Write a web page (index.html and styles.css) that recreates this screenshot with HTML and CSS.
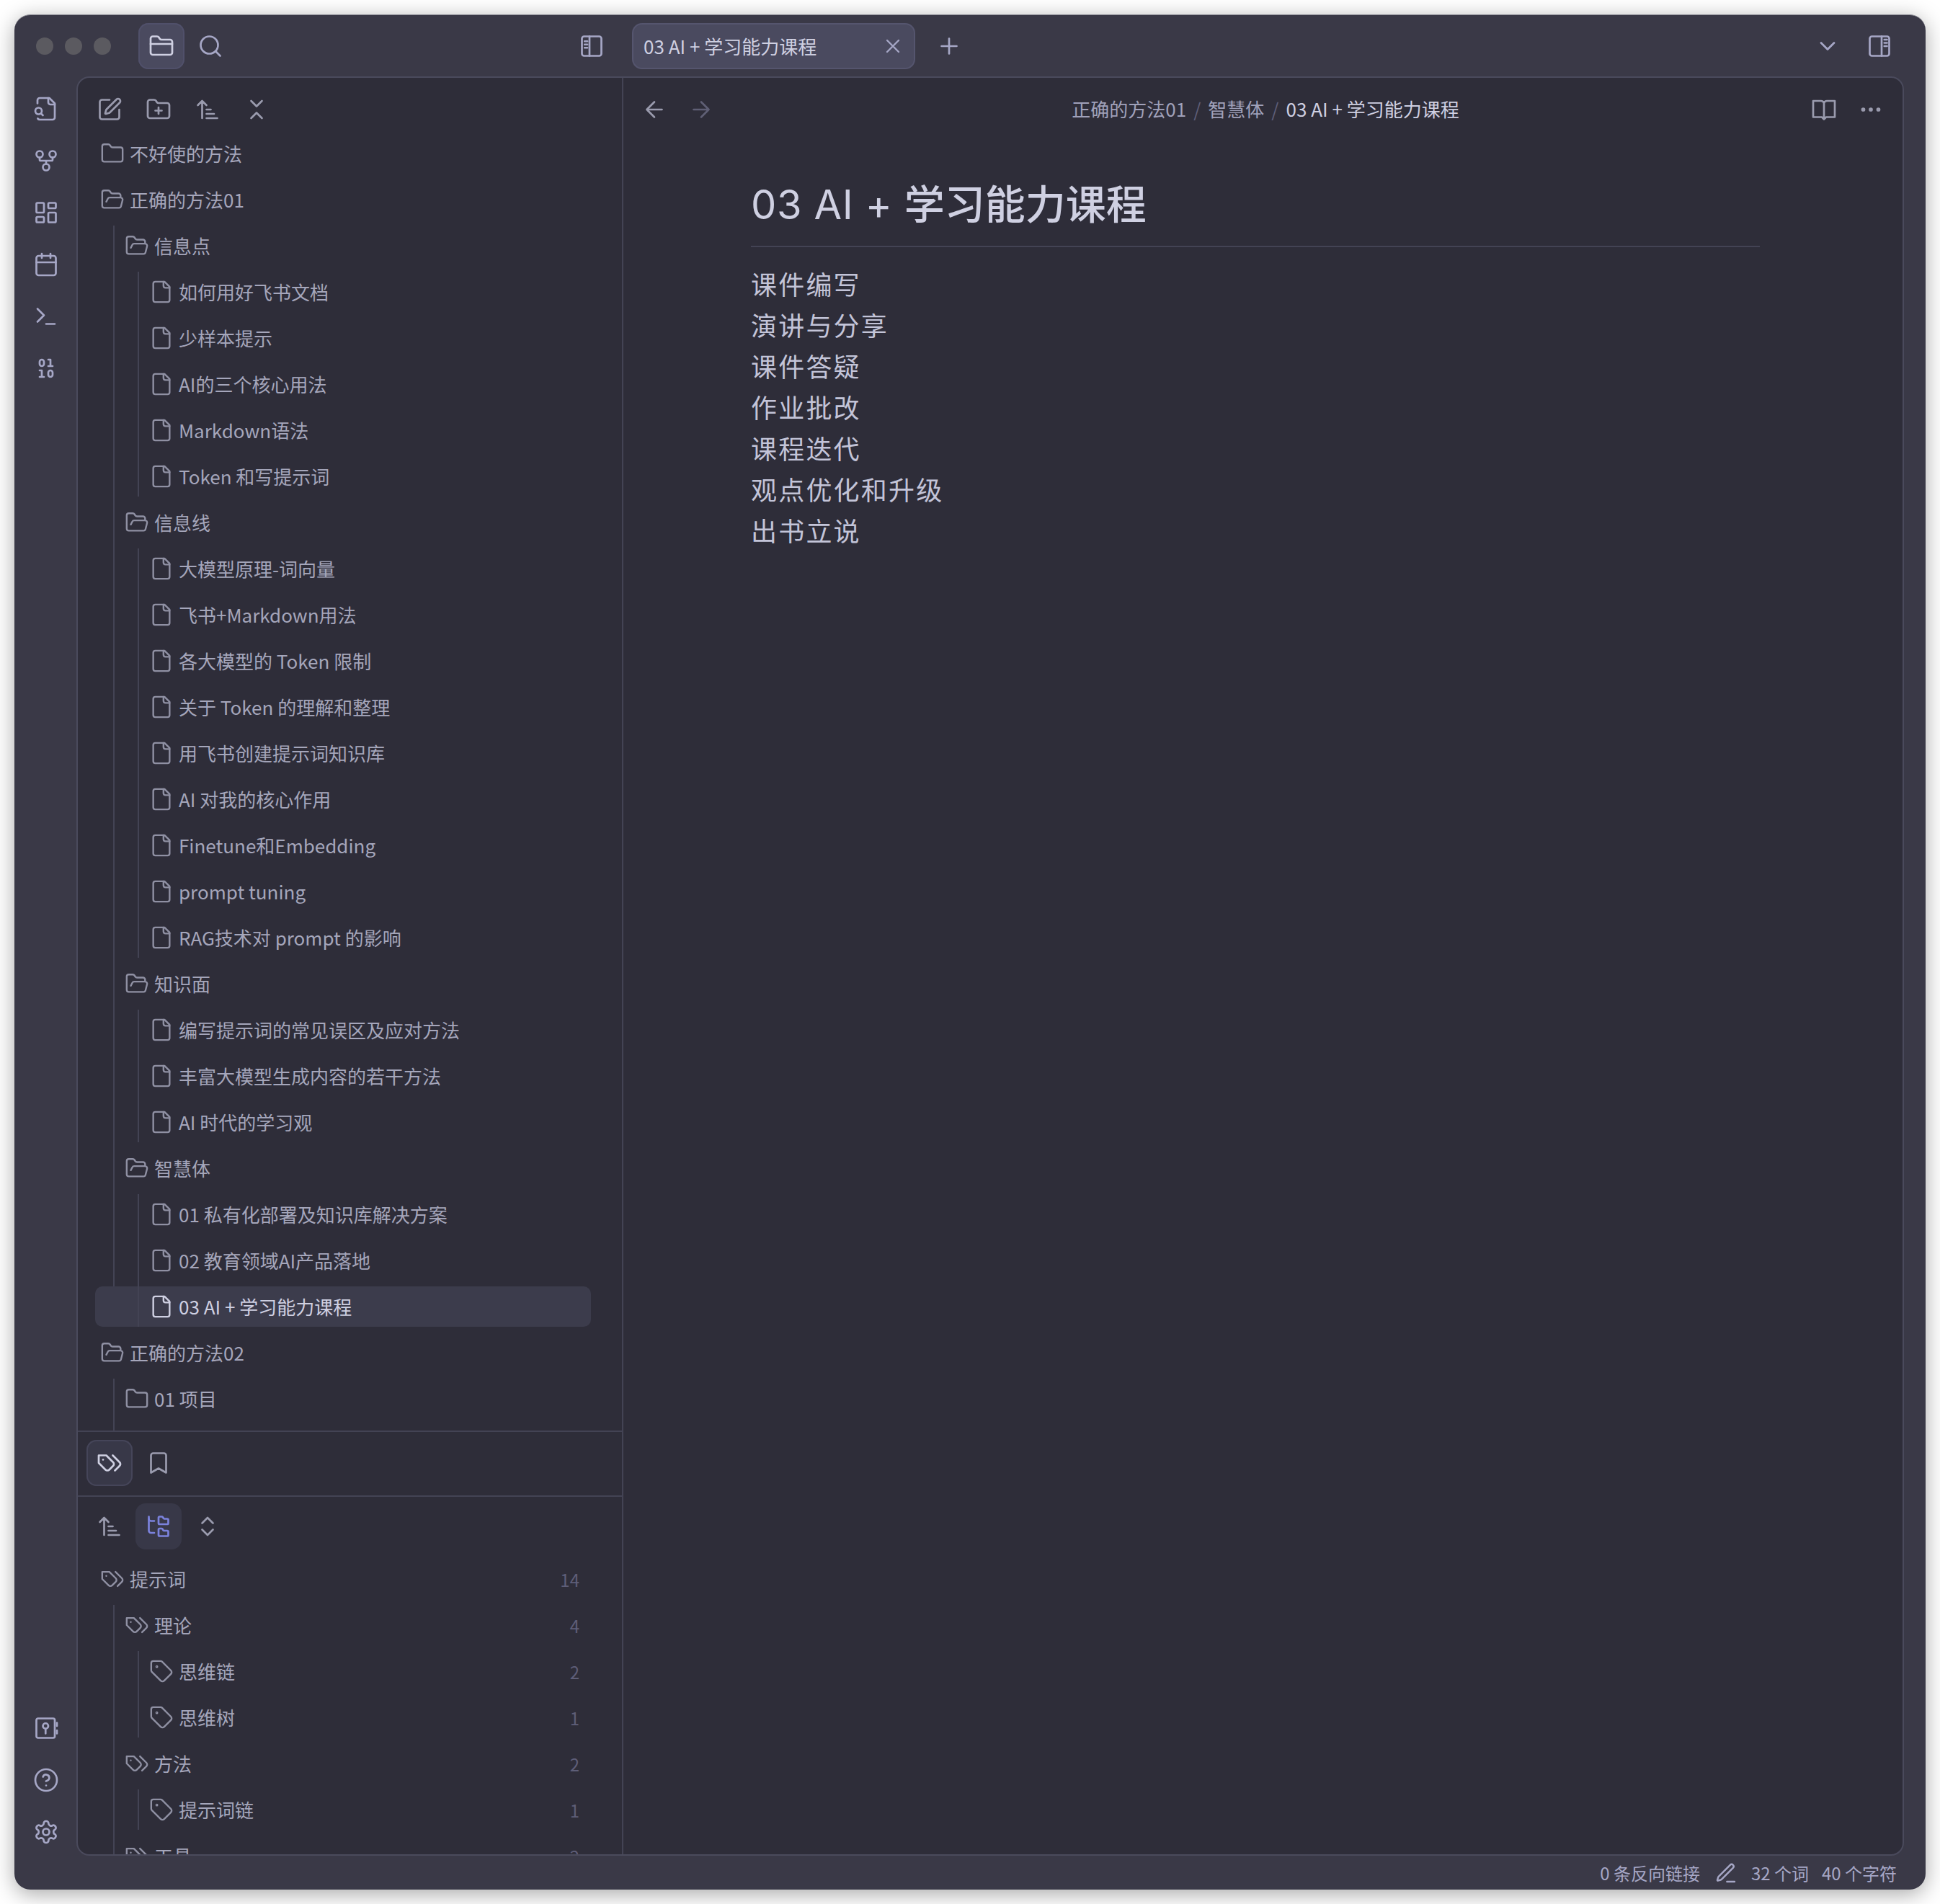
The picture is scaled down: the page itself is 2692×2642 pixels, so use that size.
FILE: index.html
```html
<!DOCTYPE html>
<html lang="zh">
<head>
<meta charset="utf-8">
<title>03 AI + 学习能力课程</title>
<link rel="stylesheet" href="styles.css">
</head>
<body>
<svg class="defs" width="0" height="0">
<symbol id="i-folder-top" viewBox="0 0 24 24"><path d="M20 20a2 2 0 0 0 2-2V8a2 2 0 0 0-2-2h-7.9a2 2 0 0 1-1.69-.9L9.6 3.9A2 2 0 0 0 7.93 3H4a2 2 0 0 0-2 2v13a2 2 0 0 0 2 2Z"/><path d="M2 10h20"/></symbol>
<symbol id="i-folder" viewBox="0 0 24 24"><path d="M20 20a2 2 0 0 0 2-2V8a2 2 0 0 0-2-2h-7.9a2 2 0 0 1-1.69-.9L9.6 3.9A2 2 0 0 0 7.93 3H4a2 2 0 0 0-2 2v13a2 2 0 0 0 2 2Z"/></symbol>
<symbol id="i-open" viewBox="0 0 24 24"><path d="m6 14 1.5-2.9A2 2 0 0 1 9.24 10H20a2 2 0 0 1 1.94 2.5l-1.54 6a2 2 0 0 1-1.95 1.5H4a2 2 0 0 1-2-2V5a2 2 0 0 1 2-2h3.9a2 2 0 0 1 1.69.9l.81 1.2a2 2 0 0 0 1.67.9H18a2 2 0 0 1 2 2v2"/></symbol>
<symbol id="i-file" viewBox="0 0 24 24"><path d="M15 2H6a2 2 0 0 0-2 2v16a2 2 0 0 0 2 2h12a2 2 0 0 0 2-2V7Z"/><path d="M14 2v4a2 2 0 0 0 2 2h4"/></symbol>
<symbol id="i-search" viewBox="0 0 24 24"><circle cx="11" cy="11" r="8"/><path d="m21 21-4.3-4.3"/></symbol>
<symbol id="i-left" viewBox="0 0 24 24"><rect x="3" y="3" width="18" height="18" rx="2"/><path d="M10 3v18M5.5 7.5H8M5.5 10.5H8M5.5 13.5H8"/></symbol>
<symbol id="i-right" viewBox="0 0 24 24"><rect x="3" y="3" width="18" height="18" rx="2"/><path d="M14 3v18M16.5 6H19M16.5 9H19M16.5 12H19"/></symbol>
<symbol id="i-edit" viewBox="0 0 24 24"><path d="M12 3H5a2 2 0 0 0-2 2v14a2 2 0 0 0 2 2h14a2 2 0 0 0 2-2v-7"/><path d="M18.375 2.625a1 1 0 0 1 3 3l-9.013 9.014a2 2 0 0 1-.853.505l-2.873.84a.5.5 0 0 1-.62-.62l.84-2.873a2 2 0 0 1 .506-.852z"/></symbol>
<symbol id="i-folderplus" viewBox="0 0 24 24"><path d="M20 20a2 2 0 0 0 2-2V8a2 2 0 0 0-2-2h-7.9a2 2 0 0 1-1.69-.9L9.6 3.9A2 2 0 0 0 7.93 3H4a2 2 0 0 0-2 2v13a2 2 0 0 0 2 2Z"/><path d="M12 10v6M9 13h6"/></symbol>
<symbol id="i-sort" viewBox="0 0 24 24"><path d="m3 8 4-4 4 4M7 4v16M11 12h4M11 16h7M11 20h10"/></symbol>
<symbol id="i-collapse" viewBox="0 0 24 24"><path d="m7 20 5-5 5 5M7 4l5 5 5-5"/></symbol>
<symbol id="i-expand" viewBox="0 0 24 24"><path d="m7 15 5 5 5-5M7 9l5-5 5 5"/></symbol>
<symbol id="i-filesearch" viewBox="0 0 24 24"><path d="M14 2v4a2 2 0 0 0 2 2h4"/><path d="M4.268 21a2 2 0 0 0 1.727 1H18a2 2 0 0 0 2-2V7l-5-5H6a2 2 0 0 0-2 2v3"/><path d="m9 18-1.5-1.5"/><circle cx="5" cy="14" r="3"/></symbol>
<symbol id="i-graph" viewBox="0 0 24 24"><circle cx="12" cy="18" r="3"/><circle cx="6" cy="6" r="3"/><circle cx="18" cy="6" r="3"/><path d="M18 9v2c0 .6-.4 1-1 1H7c-.6 0-1-.4-1-1V9M12 12v3"/></symbol>
<symbol id="i-dash" viewBox="0 0 24 24"><rect x="3" y="3" width="7" height="9" rx="1"/><rect x="14" y="3" width="7" height="5" rx="1"/><rect x="14" y="12" width="7" height="9" rx="1"/><rect x="3" y="16" width="7" height="5" rx="1"/></symbol>
<symbol id="i-cal" viewBox="0 0 24 24"><rect x="3" y="4" width="18" height="18" rx="2"/><path d="M16 2v4M8 2v4M3 10h18"/></symbol>
<symbol id="i-term" viewBox="0 0 24 24"><path d="m4 17 6-6-6-6M12 19h8"/></symbol>
<symbol id="i-binary" viewBox="0 0 24 24"><rect x="14" y="14" width="4" height="6" rx="2"/><rect x="6" y="4" width="4" height="6" rx="2"/><path d="M6 20h4M14 10h4M6 14h2v6M14 4h2v6"/></symbol>
<symbol id="i-vault" viewBox="0 0 24 24"><rect x="3" y="3" width="17" height="18" rx="1.5"/><circle cx="11.5" cy="10" r="2.5"/><path d="M11.5 12.5V17M22 7v3M22 14v3"/></symbol>
<symbol id="i-help" viewBox="0 0 24 24"><circle cx="12" cy="12" r="10"/><path d="M9.09 9a3 3 0 0 1 5.83 1c0 2-3 3-3 3M12 17h.01"/></symbol>
<symbol id="i-gear" viewBox="0 0 24 24"><path d="M12.22 2h-.44a2 2 0 0 0-2 2v.18a2 2 0 0 1-1 1.73l-.43.25a2 2 0 0 1-2 0l-.15-.08a2 2 0 0 0-2.73.73l-.22.38a2 2 0 0 0 .73 2.73l.15.1a2 2 0 0 1 1 1.72v.51a2 2 0 0 1-1 1.74l-.15.09a2 2 0 0 0-.73 2.73l.22.38a2 2 0 0 0 2.73.73l.15-.08a2 2 0 0 1 2 0l.43.25a2 2 0 0 1 1 1.73V20a2 2 0 0 0 2 2h.44a2 2 0 0 0 2-2v-.18a2 2 0 0 1 1-1.73l.43-.25a2 2 0 0 1 2 0l.15.08a2 2 0 0 0 2.73-.73l.22-.39a2 2 0 0 0-.73-2.73l-.15-.08a2 2 0 0 1-1-1.74v-.5a2 2 0 0 1 1-1.74l.15-.09a2 2 0 0 0 .73-2.73l-.22-.38a2 2 0 0 0-2.73-.73l-.15.08a2 2 0 0 1-2 0l-.43-.25a2 2 0 0 1-1-1.73V4a2 2 0 0 0-2-2z"/><circle cx="12" cy="12" r="3"/></symbol>
<symbol id="i-tags" viewBox="0 0 24 24"><path d="M9 5H2v7l6.29 6.29c.94.94 2.48.94 3.42 0l3.58-3.58c.94-.94.94-2.48 0-3.42L9 5Z"/><path d="M6 9.01V9"/><path d="m15 5 6.3 6.3a2.4 2.4 0 0 1 0 3.4L17 19"/></symbol>
<symbol id="i-tag" viewBox="0 0 24 24"><path d="M12.586 2.586A2 2 0 0 0 11.172 2H4a2 2 0 0 0-2 2v7.172a2 2 0 0 0 .586 1.414l8.704 8.704a2.426 2.426 0 0 0 3.42 0l6.58-6.58a2.426 2.426 0 0 0 0-3.42z"/><circle cx="7.5" cy="7.5" r=".5"/></symbol>
<symbol id="i-bookmark" viewBox="0 0 24 24"><path d="m19 21-7-4-7 4V5a2 2 0 0 1 2-2h10a2 2 0 0 1 2 2v16z"/></symbol>
<symbol id="i-tree" viewBox="0 0 24 24"><path d="M20 10a1 1 0 0 0 1-1V6a1 1 0 0 0-1-1h-2.5a1 1 0 0 1-.8-.4l-.9-1.2A1 1 0 0 0 15 3h-2a1 1 0 0 0-1 1v5a1 1 0 0 0 1 1Z"/><path d="M20 21a1 1 0 0 0 1-1v-3a1 1 0 0 0-1-1h-2.9a1 1 0 0 1-.88-.55l-.42-.85a1 1 0 0 0-.92-.6H13a1 1 0 0 0-1 1v5a1 1 0 0 0 1 1Z"/><path d="M3 5a2 2 0 0 0 2 2h3"/><path d="M3 3v13a2 2 0 0 0 2 2h3"/></symbol>
<symbol id="i-chevron" viewBox="0 0 24 24"><path d="m6 9 6 6 6-6"/></symbol>
<symbol id="i-x" viewBox="0 0 24 24"><path d="M18 6 6 18M6 6l12 12"/></symbol>
<symbol id="i-plus" viewBox="0 0 24 24"><path d="M5 12h14M12 5v14"/></symbol>
<symbol id="i-back" viewBox="0 0 24 24"><path d="m12 19-7-7 7-7M19 12H5"/></symbol>
<symbol id="i-forward" viewBox="0 0 24 24"><path d="M5 12h14M12 5l7 7-7 7"/></symbol>
<symbol id="i-book" viewBox="0 0 24 24"><path d="M12 5v16M2 4h7a3 3 0 0 1 3 2 3 3 0 0 1 3-2h7v15h-8l-2 2-2-2H2z"/></symbol>
<symbol id="i-dots" viewBox="0 0 24 24"><circle cx="12" cy="12" r="1"/><circle cx="19" cy="12" r="1"/><circle cx="5" cy="12" r="1"/></symbol>
<symbol id="i-pen" viewBox="0 0 24 24"><path d="M13 21h8"/><path d="M16.376 3.622a1 1 0 0 1 3.002 3.002L7.368 18.635a2 2 0 0 1-.855.506l-2.872.838a.5.5 0 0 1-.62-.62l.838-2.872a2 2 0 0 1 .506-.854z"/></symbol>
</svg>

<div class="window">
  <header class="titlebar">
    <div class="title-left">
      <div class="dots"><span class="dot"></span><span class="dot"></span><span class="dot"></span></div>
      <button class="btn btn-on"><svg class="ico ico-bright"><use href="#i-folder-top"/></svg></button>
      <button class="btn"><svg class="ico"><use href="#i-search"/></svg></button>
      <span class="spacer"></span>
      <button class="btn"><svg class="ico"><use href="#i-left"/></svg></button>
    </div>
    <div class="tab"><span class="tab-title">03 AI + 学习能力课程</span><svg class="ico ico-sm"><use href="#i-x"/></svg></div>
    <button class="btn btn-plus"><svg class="ico"><use href="#i-plus"/></svg></button>
    <span class="spacer"></span>
    <button class="btn"><svg class="ico"><use href="#i-chevron"/></svg></button>
    <button class="btn"><svg class="ico"><use href="#i-right"/></svg></button>
  </header>

  <div class="workspace">
    <nav class="ribbon">
      <div class="ribbon-group">
        <svg class="ico"><use href="#i-filesearch"/></svg>
        <svg class="ico"><use href="#i-graph"/></svg>
        <svg class="ico"><use href="#i-dash"/></svg>
        <svg class="ico"><use href="#i-cal"/></svg>
        <svg class="ico"><use href="#i-term"/></svg>
        <svg class="ico"><use href="#i-binary"/></svg>
      </div>
      <div class="ribbon-group">
        <svg class="ico"><use href="#i-vault"/></svg>
        <svg class="ico"><use href="#i-help"/></svg>
        <svg class="ico"><use href="#i-gear"/></svg>
      </div>
    </nav>

    <div class="panels">
      <aside class="sidebar">
        <div class="toolbar toolbar-files">
          <button class="btn"><svg class="ico ico-grey"><use href="#i-edit"/></svg></button>
          <button class="btn"><svg class="ico ico-grey"><use href="#i-folderplus"/></svg></button>
          <button class="btn"><svg class="ico ico-grey"><use href="#i-sort"/></svg></button>
          <button class="btn"><svg class="ico ico-grey"><use href="#i-collapse"/></svg></button>
        </div>
        <div class="tree tree-files">
          <div class="row l0"><svg class="ico-t"><use href="#i-folder"/></svg><span class="label">不好使的方法</span></div>
          <div class="row l0"><svg class="ico-t"><use href="#i-open"/></svg><span class="label">正确的方法01</span></div>
          <div class="group g1">
            <div class="row l1"><svg class="ico-t"><use href="#i-open"/></svg><span class="label">信息点</span></div>
            <div class="group g2">
              <div class="row l2"><svg class="ico-t"><use href="#i-file"/></svg><span class="label">如何用好飞书文档</span></div>
              <div class="row l2"><svg class="ico-t"><use href="#i-file"/></svg><span class="label">少样本提示</span></div>
              <div class="row l2"><svg class="ico-t"><use href="#i-file"/></svg><span class="label">AI的三个核心用法</span></div>
              <div class="row l2"><svg class="ico-t"><use href="#i-file"/></svg><span class="label">Markdown语法</span></div>
              <div class="row l2"><svg class="ico-t"><use href="#i-file"/></svg><span class="label">Token 和写提示词</span></div>
            </div>
            <div class="row l1"><svg class="ico-t"><use href="#i-open"/></svg><span class="label">信息线</span></div>
            <div class="group g2">
              <div class="row l2"><svg class="ico-t"><use href="#i-file"/></svg><span class="label">大模型原理-词向量</span></div>
              <div class="row l2"><svg class="ico-t"><use href="#i-file"/></svg><span class="label">飞书+Markdown用法</span></div>
              <div class="row l2"><svg class="ico-t"><use href="#i-file"/></svg><span class="label">各大模型的 Token 限制</span></div>
              <div class="row l2"><svg class="ico-t"><use href="#i-file"/></svg><span class="label">关于 Token 的理解和整理</span></div>
              <div class="row l2"><svg class="ico-t"><use href="#i-file"/></svg><span class="label">用飞书创建提示词知识库</span></div>
              <div class="row l2"><svg class="ico-t"><use href="#i-file"/></svg><span class="label">AI 对我的核心作用</span></div>
              <div class="row l2"><svg class="ico-t"><use href="#i-file"/></svg><span class="label">Finetune和Embedding</span></div>
              <div class="row l2"><svg class="ico-t"><use href="#i-file"/></svg><span class="label">prompt tuning</span></div>
              <div class="row l2"><svg class="ico-t"><use href="#i-file"/></svg><span class="label">RAG技术对 prompt 的影响</span></div>
            </div>
            <div class="row l1"><svg class="ico-t"><use href="#i-open"/></svg><span class="label">知识面</span></div>
            <div class="group g2">
              <div class="row l2"><svg class="ico-t"><use href="#i-file"/></svg><span class="label">编写提示词的常见误区及应对方法</span></div>
              <div class="row l2"><svg class="ico-t"><use href="#i-file"/></svg><span class="label">丰富大模型生成内容的若干方法</span></div>
              <div class="row l2"><svg class="ico-t"><use href="#i-file"/></svg><span class="label">AI 时代的学习观</span></div>
            </div>
            <div class="row l1"><svg class="ico-t"><use href="#i-open"/></svg><span class="label">智慧体</span></div>
            <div class="group g2">
              <div class="row l2"><svg class="ico-t"><use href="#i-file"/></svg><span class="label">01 私有化部署及知识库解决方案</span></div>
              <div class="row l2"><svg class="ico-t"><use href="#i-file"/></svg><span class="label">02 教育领域AI产品落地</span></div>
              <div class="row l2 row-active"><svg class="ico-t"><use href="#i-file"/></svg><span class="label">03 AI + 学习能力课程</span></div>
            </div>
          </div>
          <div class="row l0"><svg class="ico-t"><use href="#i-open"/></svg><span class="label">正确的方法02</span></div>
          <div class="group g1">
            <div class="row l1"><svg class="ico-t"><use href="#i-folder"/></svg><span class="label">01 项目</span></div>
            <div class="row l1 row-filler"></div>
          </div>
        </div>

        <div class="pane-tabs">
          <button class="btn btn-outline"><svg class="ico ico-bright"><use href="#i-tags"/></svg></button>
          <button class="btn"><svg class="ico ico-grey"><use href="#i-bookmark"/></svg></button>
        </div>
        <div class="toolbar toolbar-tags">
          <button class="btn"><svg class="ico ico-grey"><use href="#i-sort"/></svg></button>
          <button class="btn btn-fill"><svg class="ico ico-accent"><use href="#i-tree"/></svg></button>
          <button class="btn"><svg class="ico ico-grey"><use href="#i-expand"/></svg></button>
        </div>
        <div class="tree tree-tags">
          <div class="row l0"><svg class="ico-t"><use href="#i-tags"/></svg><span class="label">提示词</span><span class="count">14</span></div>
          <div class="group g1">
            <div class="row l1"><svg class="ico-t"><use href="#i-tags"/></svg><span class="label">理论</span><span class="count">4</span></div>
            <div class="group g2">
              <div class="row l2"><svg class="ico-t"><use href="#i-tag"/></svg><span class="label">思维链</span><span class="count">2</span></div>
              <div class="row l2"><svg class="ico-t"><use href="#i-tag"/></svg><span class="label">思维树</span><span class="count">1</span></div>
            </div>
            <div class="row l1"><svg class="ico-t"><use href="#i-tags"/></svg><span class="label">方法</span><span class="count">2</span></div>
            <div class="group g2">
              <div class="row l2"><svg class="ico-t"><use href="#i-tag"/></svg><span class="label">提示词链</span><span class="count">1</span></div>
            </div>
            <div class="row l1"><svg class="ico-t"><use href="#i-tags"/></svg><span class="label">工具</span><span class="count">2</span></div>
          </div>
        </div>
      </aside>

      <main class="main">
        <div class="view-header">
          <div class="view-side">
            <button class="btn"><svg class="ico ico-grey"><use href="#i-back"/></svg></button>
            <button class="btn btn-dim"><svg class="ico"><use href="#i-forward"/></svg></button>
          </div>
          <div class="crumbs">
            <span>正确的方法01</span><span class="sep">/</span><span>智慧体</span><span class="sep">/</span><span class="crumb-now">03 AI + 学习能力课程</span>
          </div>
          <div class="view-side">
            <button class="btn"><svg class="ico ico-grey"><use href="#i-book"/></svg></button>
            <button class="btn"><svg class="ico ico-grey ico-fill"><use href="#i-dots"/></svg></button>
          </div>
        </div>
        <article class="doc">
          <h1 class="doc-title"><span class="latin">03 AI + </span>学习能力课程</h1>
          <p class="doc-line">课件编写</p>
          <p class="doc-line">演讲与分享</p>
          <p class="doc-line">课件答疑</p>
          <p class="doc-line">作业批改</p>
          <p class="doc-line">课程迭代</p>
          <p class="doc-line">观点优化和升级</p>
          <p class="doc-line">出书立说</p>
        </article>
      </main>
    </div>
  </div>

  <footer class="status">
    <span>0 条反向链接</span>
    <svg class="ico ico-status"><use href="#i-pen"/></svg>
    <span>32 个词</span>
    <span>40 个字符</span>
  </footer>
</div>
</body>
</html>
```

FILE: styles.css
```css
* { box-sizing: border-box; }
html, body { margin: 0; padding: 0; background: #ffffff; }
body {
  width: 2692px;
  height: 2642px;
  padding: 20px;
  font-family: "Noto Sans CJK SC", "Noto Sans", sans-serif;
  color: #a9aac5;
}
.defs { position: absolute; }
svg { display: block; flex: none; }
symbol, use { fill: none; }

.ico, .ico-t {
  fill: none;
  stroke: #a6a7c6;
  stroke-width: 1.8;
  stroke-linecap: round;
  stroke-linejoin: round;
}
.ico { width: 36px; height: 36px; }
.ico-t { width: 34px; height: 34px; stroke-width: 1.7; stroke: #8f90a3; }
.ico-sm { width: 32px; height: 32px; }
.ico-accent { stroke: #7b82dc; }
.ico-bright { stroke: #cfd0e2; }
.ico-grey { stroke: #9a9bae; }
.ico-fill { fill: #9a9bae; }
.ico-status { width: 32px; height: 32px; margin: 0 1px 0 2px; }

.window {
  width: 2652px;
  height: 2602px;
  display: flex;
  flex-direction: column;
  background: #3a3947;
  border-radius: 22px;
  border-top: 1px solid #8d8d96;
  box-shadow: 0 6px 30px rgba(0, 0, 0, 0.35);
  overflow: hidden;
}

.btn {
  width: 64px;
  height: 64px;
  padding: 0;
  border: 0;
  border-radius: 14px;
  background: transparent;
  display: flex;
  align-items: center;
  justify-content: center;
  flex: none;
}
.btn-on { background: #4a4a5f; box-shadow: inset 0 0 0 2px #50506a; }
.btn-outline { background: #383848; box-shadow: inset 0 0 0 2px #454559; }
.btn-fill { background: #383848; }
.btn-dim .ico { stroke: #5f5f75; }
.btn-plus { margin-left: 7px; }
.spacer { flex: 1; }

.titlebar {
  height: 85px;
  flex: none;
  display: flex;
  align-items: flex-start;
  padding: 11px 32px 0 0;
  gap: 8px;
}
.title-left {
  width: 833px;
  display: flex;
  align-items: center;
  flex: none;
  padding-left: 30px;
  margin-right: 16px;
}
.title-left .btn-on { margin-left: 38px; margin-right: 4px; }
.dots { display: flex; gap: 16px; }
.dot { width: 24px; height: 24px; border-radius: 50%; background: #5b5a60; }

.tab {
  width: 393px;
  height: 64px;
  flex: none;
  display: flex;
  align-items: center;
  justify-content: space-between;
  padding: 0 13px 0 14px;
  background: #4a4a5f;
  border: 2px solid #55556e;
  border-radius: 14px;
  font-size: 26px;
  color: #cfd0e2;
}
.tab-title { white-space: nowrap; padding-bottom: 2px; }

.workspace { flex: 1; min-height: 0; display: flex; }
.ribbon {
  width: 86px;
  flex: none;
  display: flex;
  flex-direction: column;
  justify-content: space-between;
  align-items: center;
  padding: 27px 0 15px 2px;
}
.ribbon-group { display: flex; flex-direction: column; gap: 36px; }

.panels {
  flex: 1;
  min-width: 0;
  margin-right: 30px;
  display: flex;
  background: #2e2d39;
  border: 2px solid #4a4a5c;
  border-radius: 18px;
  overflow: hidden;
}

.sidebar {
  width: 757px;
  flex: none;
  display: flex;
  flex-direction: column;
  border-right: 2px solid #434354;
  min-height: 0;
}
.toolbar { display: flex; gap: 4px; padding-left: 12px; flex: none; }
.toolbar-files { padding-top: 12px; padding-bottom: 1px; }
.toolbar-tags { padding-top: 9px; padding-bottom: 13px; }
.pane-tabs {
  flex: none;
  display: flex;
  gap: 4px;
  padding: 11px 0 13px 12px;
  border-top: 2px solid #434354;
  border-bottom: 2px solid #434354;
}

.tree {
  display: flex;
  flex-direction: column;
  gap: 8px;
  padding: 0 43px 0 24px;
  overflow: hidden;
  min-height: 0;
}
.tree-files { height: 1800px; flex: none; }
.tree-tags { flex: 1; }

.group { position: relative; display: flex; flex-direction: column; gap: 8px; flex: none; }
.group::before {
  content: "";
  position: absolute;
  top: 0;
  bottom: 0;
  width: 2px;
  background: #434354;
}
.g1::before { left: 25px; }
.g2::before { left: 59px; }

.row {
  height: 56px;
  flex: none;
  display: flex;
  align-items: center;
  gap: 7px;
  border-radius: 10px;
  font-size: 26px;
  white-space: nowrap;
  color: #a5a6bb;
}
.label { padding-bottom: 1px; }
.l0 { padding-left: 7px; }
.l1 { padding-left: 41px; }
.l2 { padding-left: 75px; }
.row-active { background: #3c3c4c; color: #cfd0e2; }
.row-active .ico-t { stroke: #cfd0e2; }
.count { margin-left: auto; padding-right: 16px; color: #5e5e78; font-size: 24px; }

.main { flex: 1; min-width: 0; display: flex; flex-direction: column; }
.view-header {
  height: 88px;
  flex: none;
  display: flex;
  align-items: center;
  justify-content: space-between;
  padding: 0 12px 0 11px;
}
.view-side { display: flex; gap: 1px; }
.crumbs {
  display: flex;
  align-items: center;
  gap: 10px;
  font-size: 26px;
  color: #a0a1ba;
  margin-left: 8px;
  padding-bottom: 3px;
}
.sep { color: #5e5e78; }
.crumb-now { color: #cfd0e2; }

.doc { padding: 49px 198px 0 177px; }
.doc-title {
  margin: 0 0 22px;
  height: 98px;
  border-bottom: 2px solid #434354;
  font-size: 56px;
  line-height: 70px;
  font-weight: 500;
  color: #cfd0e2;
}
.latin { font-family: Inter, "Noto Sans", sans-serif; font-weight: 400; letter-spacing: 0.6px; }
.doc-line {
  margin: 0;
  font-size: 36px;
  line-height: 57px;
  letter-spacing: 2.2px;
  color: #c3c4d8;
}

.status {
  height: 47px;
  flex: none;
  display: flex;
  align-items: center;
  justify-content: flex-end;
  gap: 18px;
  padding-right: 40px;
  font-size: 24px;
  color: #a6a7c6;
}
```
